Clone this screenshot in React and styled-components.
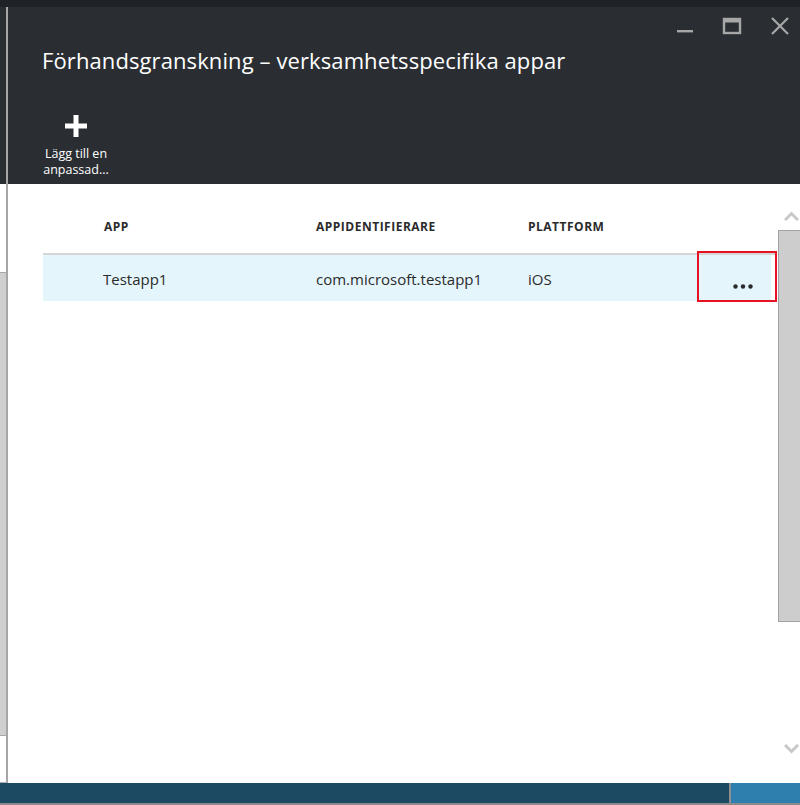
import styled, { createGlobalStyle } from "styled-components";

const Global = createGlobalStyle`
  html, body {
    margin: 0;
    padding: 0;
    background: #ffffff;
  }
  body {
    font-family: "Open Sans", "Noto Sans", "Liberation Sans", sans-serif;
  }
`;

const Page = styled.div`
  width: 800px;
  height: 805px;
  display: flex;
  flex-direction: column;
  overflow: hidden;
`;

const TopStrip = styled.div`
  height: 7px;
  background: #1f2327;
`;

const Main = styled.div`
  flex: 1;
  display: flex;
`;

const LeftStub = styled.div`
  width: 6px;
  display: flex;
  flex-direction: column;
`;

const StubHeader = styled.div`
  height: 177px;
  background: #2a2e33;
`;

const StubBody = styled.div`
  flex: 1;
  background: #fff;
  display: flex;
  flex-direction: column;
  padding-top: 88px;
  padding-bottom: 46px;
  border-bottom: 1px solid #b0b0b0;
`;

const StubThumb = styled.div`
  flex: 1;
  background: #cfcfcf;
  border-top: 1px solid #a8a8a8;
  border-bottom: 1px solid #a8a8a8;
`;

const Divider = styled.div`
  width: 2px;
  background: #a6a6a6;
`;

const Blade = styled.div`
  flex: 1;
  display: flex;
  flex-direction: column;
`;

const Header = styled.div`
  height: 177px;
  background: #2a2e33;
  position: relative;
  display: flex;
  flex-direction: column;
  padding-left: 34px;
  box-sizing: border-box;
`;

const Title = styled.h1`
  margin: 38px 0 0 0;
  font-weight: 400;
  font-size: 22px;
  line-height: 30px;
  color: #ffffff;
  letter-spacing: 0.1px;
`;

const WindowControls = styled.div`
  position: absolute;
  top: 9px;
  right: 10px;
  display: flex;
  align-items: center;
  gap: 28px;
`;

const Command = styled.button`
  margin-top: 40px;
  width: 68px;
  background: none;
  border: none;
  padding: 0;
  display: flex;
  flex-direction: column;
  align-items: center;
  color: #ffffff;
  font-family: inherit;
  font-size: 12.5px;
  line-height: 16px;
  cursor: pointer;
`;

const CommandLabel = styled.span`
  margin-top: 9px;
  text-align: center;
  white-space: nowrap;
`;

const Content = styled.div`
  flex: 1;
  display: flex;
  background: #fff;
`;

const TableArea = styled.div`
  flex: 1;
  padding-left: 35px;
`;

const Grid = styled.div`
  display: grid;
  grid-template-columns: 273px 212px 169px 80px;
  width: 734px;
`;

const HeadRow = styled(Grid)`
  height: 69px;
  padding-top: 16px;
  box-sizing: border-box;
  align-items: center;
`;

const HeadCell = styled.div`
  padding-left: ${(p) => (p.$first ? "61px" : "0")};
  font-size: 12px;
  font-weight: 700;
  color: #2b2b2b;
  letter-spacing: 0.5px;
`;

const DataRow = styled(Grid)`
  height: 46px;
  border-top: 2px solid #d6d6d6;
  background: linear-gradient(to right, #e4f5fc 728px, #ffffff 728px);
  align-items: center;
`;

const DataCell = styled.div`
  padding-left: ${(p) => (p.$first ? "60px" : "0")};
  font-size: 15px;
  color: #2b2b2b;
  padding-top: 2px;
`;

const ActionCell = styled.div`
  align-self: stretch;
  margin-top: -4px;
  margin-bottom: -1px;
  border: 2px solid #e81123;
  display: flex;
  align-items: flex-end;
  justify-content: center;
  padding-bottom: 11px;
  padding-left: 12px;
  box-sizing: border-box;
`;

const Scrollbar = styled.div`
  width: 22px;
  display: flex;
  flex-direction: column;
  align-items: stretch;
`;

const Arrow = styled.div`
  height: ${(p) => p.$h}px;
  display: flex;
  align-items: ${(p) => (p.$up ? "flex-end" : "flex-start")};
  justify-content: center;
  padding: ${(p) => (p.$up ? "0 0 9px 4px" : "0 0 0 4px")};
  box-sizing: border-box;
`;

const Thumb = styled.div`
  height: 390px;
  background: #cdcdcd;
  border: 1px solid #a3a3a3;
  border-right: none;
`;

const Track = styled.div`
  flex: 1;
  display: flex;
  flex-direction: column;
  justify-content: flex-end;
`;

const BottomBar = styled.div`
  height: 20px;
  display: flex;
  border-bottom: 2px solid #8a8a8a;
`;

const BarLeft = styled.div`
  width: 729px;
  background: #1c4a63;
  border-right: 2px solid #8f8f8f;
`;

const BarRight = styled.div`
  flex: 1;
  background: #2e7fad;
`;

function Chevron({ up }) {
  return (
    <svg width="15" height="10" viewBox="0 0 15 10">
      <polyline
        points={up ? "1,9 7.5,2.5 14,9" : "1,1 7.5,7.5 14,1"}
        fill="none"
        stroke="#c8c8c8"
        strokeWidth="3"
      />
    </svg>
  );
}

function Dots() {
  return (
    <svg width="20" height="5" viewBox="0 0 20 5">
      <circle cx="2.5" cy="2.5" r="2.2" fill="#2b2b2b" />
      <circle cx="10" cy="2.5" r="2.2" fill="#2b2b2b" />
      <circle cx="17.5" cy="2.5" r="2.2" fill="#2b2b2b" />
    </svg>
  );
}

export default function App() {
  return (
    <Page>
      <Global />
      <TopStrip />
      <Main>
        <LeftStub>
          <StubHeader />
          <StubBody>
            <StubThumb />
          </StubBody>
        </LeftStub>
        <Divider />
        <Blade>
          <Header>
            <WindowControls>
              <svg width="18" height="18" viewBox="0 0 18 18">
                <rect x="1" y="13" width="16" height="2.4" fill="#a7a7a7" />
              </svg>
              <svg width="20" height="18" viewBox="0 0 20 18">
                <rect x="2" y="2" width="16" height="14" fill="none" stroke="#a7a7a7" strokeWidth="2.4" />
                <rect x="2" y="2" width="16" height="3.5" fill="#a7a7a7" />
              </svg>
              <svg width="20" height="20" viewBox="0 0 20 20">
                <path d="M2 2 L18 18 M18 2 L2 18" stroke="#a7a7a7" strokeWidth="2.2" />
              </svg>
            </WindowControls>
            <Title>Förhandsgranskning – verksamhetsspecifika appar</Title>
            <Command>
              <svg width="22" height="22" viewBox="0 0 22 22">
                <path d="M8.5 0 H13.5 V8.5 H22 V13.5 H13.5 V22 H8.5 V13.5 H0 V8.5 H8.5 Z" fill="#ffffff" />
              </svg>
              <CommandLabel>
                Lägg till en
                <br />
                anpassad...
              </CommandLabel>
            </Command>
          </Header>
          <Content>
            <TableArea>
              <HeadRow>
                <HeadCell $first>APP</HeadCell>
                <HeadCell>APPIDENTIFIERARE</HeadCell>
                <HeadCell>PLATTFORM</HeadCell>
                <HeadCell />
              </HeadRow>
              <DataRow>
                <DataCell $first>Testapp1</DataCell>
                <DataCell>com.microsoft.testapp1</DataCell>
                <DataCell>iOS</DataCell>
                <ActionCell>
                  <Dots />
                </ActionCell>
              </DataRow>
            </TableArea>
            <Scrollbar>
              <Arrow $up $h={46}>
                <Chevron up />
              </Arrow>
              <Thumb />
              <Track>
                <Arrow $h={39}>
                  <Chevron />
                </Arrow>
              </Track>
            </Scrollbar>
          </Content>
        </Blade>
      </Main>
      <BottomBar>
        <BarLeft />
        <BarRight />
      </BottomBar>
    </Page>
  );
}
